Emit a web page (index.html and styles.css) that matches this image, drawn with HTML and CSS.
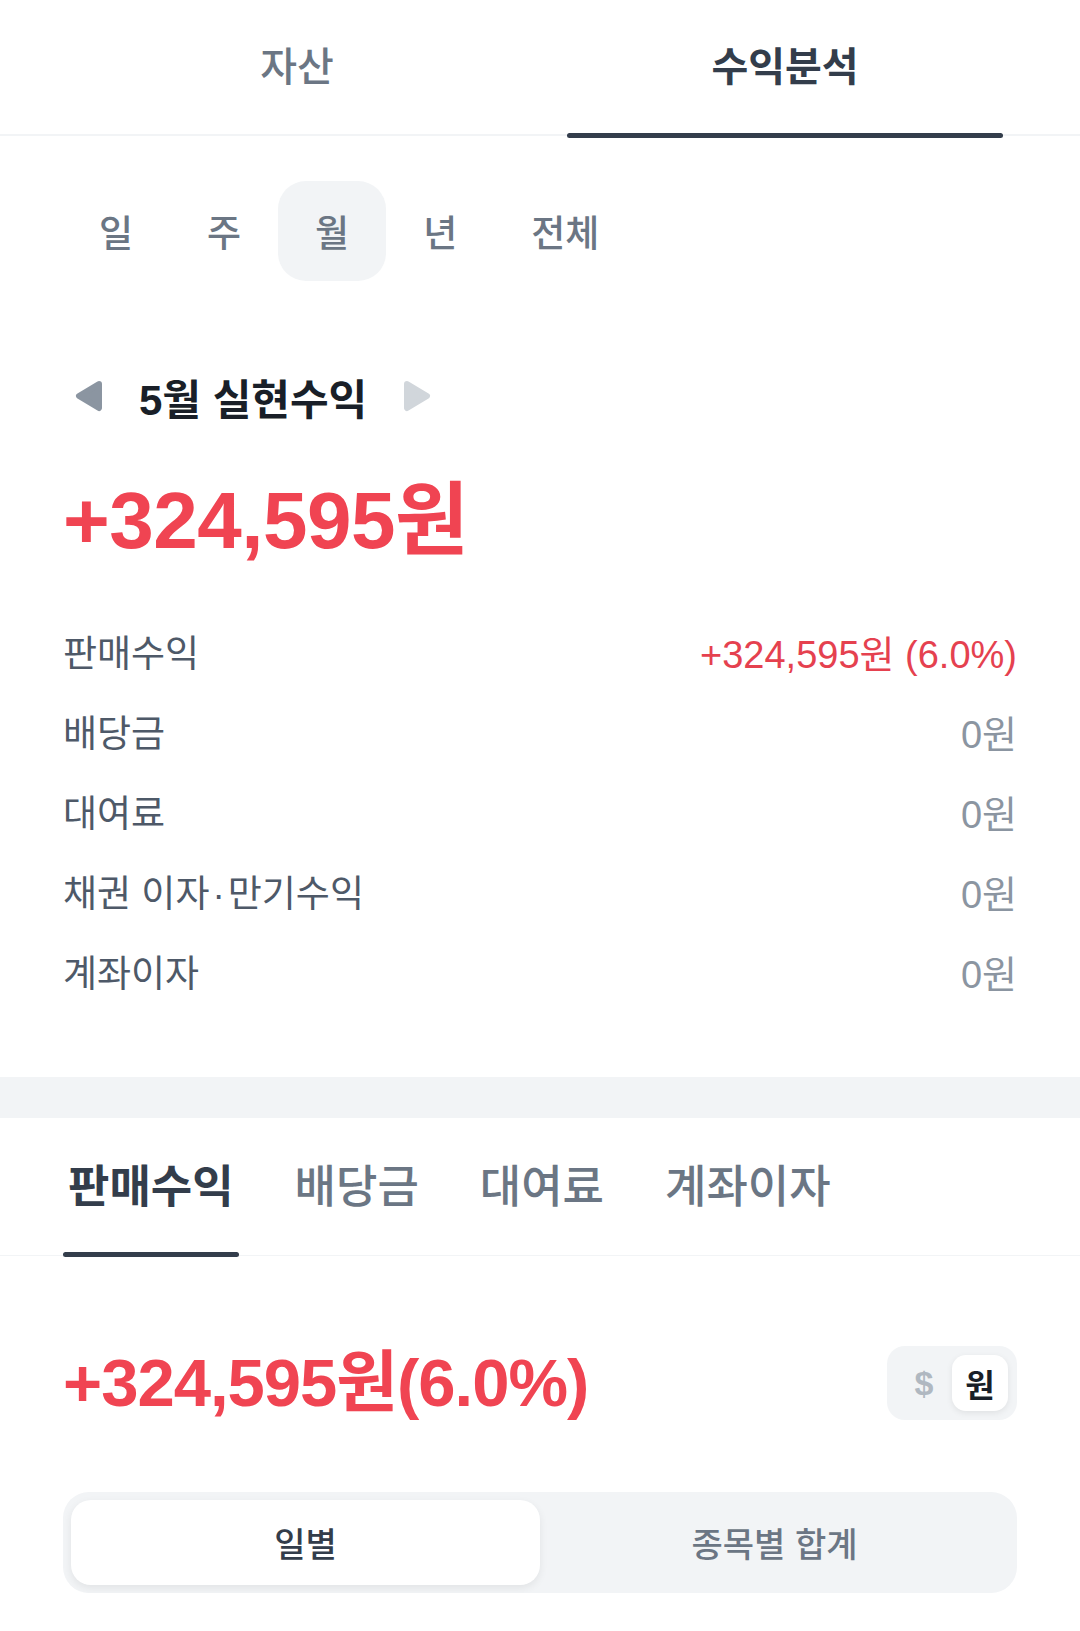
FILE: index.html
```html
<!DOCTYPE html>
<html lang="ko">
<head>
    <meta charset="UTF-8">
    <meta name="viewport" content="width=device-width, initial-scale=1.0">
    <title>수익분석</title>
    <link rel="stylesheet" href="styles.css">
</head>
<body>

    <!-- 상단 탭 -->
    <nav class="top-tabs">
        <div class="top-tab">자산</div>
        <div class="top-tab active">수익분석</div>
    </nav>

    <!-- 기간 선택 -->
    <div class="periods">
        <span class="chip">일</span>
        <span class="chip">주</span>
        <span class="chip selected">월</span>
        <span class="chip">년</span>
        <span class="chip">전체</span>
    </div>

    <!-- 실현수익 요약 -->
    <section class="summary">
        <div class="month-nav">
            <svg class="arrow" width="28" height="32" viewBox="0 0 28 32">
                <path d="M24 4 L4 16 L24 28 Z" fill="#8b95a1" stroke="#8b95a1" stroke-width="6" stroke-linejoin="round"/>
            </svg>
            <h2>5월 실현수익</h2>
            <svg class="arrow" width="28" height="32" viewBox="0 0 28 32">
                <path d="M4 4 L24 16 L4 28 Z" fill="#d1d6db" stroke="#d1d6db" stroke-width="6" stroke-linejoin="round"/>
            </svg>
        </div>

        <div class="total">+324,595원</div>

        <ul class="breakdown">
            <li><span>판매수익</span><span class="value plus">+324,595원 (6.0%)</span></li>
            <li><span>배당금</span><span class="value">0원</span></li>
            <li><span>대여료</span><span class="value">0원</span></li>
            <li><span>채권 이자<span class="dot">·</span>만기수익</span><span class="value">0원</span></li>
            <li><span>계좌이자</span><span class="value">0원</span></li>
        </ul>
    </section>

    <div class="band"></div>

    <!-- 항목 탭 -->
    <nav class="sub-tabs">
        <div class="sub-tab active">판매수익</div>
        <div class="sub-tab">배당금</div>
        <div class="sub-tab">대여료</div>
        <div class="sub-tab">계좌이자</div>
    </nav>

    <section class="detail">
        <div class="detail-head">
            <div class="detail-total">+324,595원(6.0%)</div>
            <div class="currency">
                <span class="cur">$</span>
                <span class="cur on">원</span>
            </div>
        </div>

        <div class="segment">
            <div class="seg on">일별</div>
            <div class="seg">종목별 합계</div>
        </div>
    </section>

</body>
</html>
```

FILE: styles.css
```css
/* 기본 */
body {
    margin: 0;
    padding: 0;
    background-color: #ffffff;
    font-family: "Liberation Sans", "Noto Sans CJK KR", sans-serif;
    color: #191f28;
}

/* 상단 탭 */
.top-tabs {
    display: flex;
    gap: 52px;
    padding: 0 77px 0 79px;
    height: 134px;
    border-bottom: 2px solid #f2f4f6;
}

.top-tab {
    position: relative;
    width: 436px;
    display: flex;
    align-items: center;
    justify-content: center;
    padding-bottom: 6px;
    font-family: "Noto Sans CJK KR", sans-serif;
    font-size: 40px;
    font-weight: 500;
    color: #6b7684;
}

.top-tab.active {
    font-weight: 700;
    color: #333d4b;
}

.top-tab.active::after {
    content: "";
    position: absolute;
    left: 0;
    right: 0;
    bottom: -4px;
    height: 5px;
    border-radius: 3px;
    background-color: #333d4b;
}

/* 기간 선택 */
.periods {
    display: flex;
    padding: 45px 63px 0 62px;
}

.chip {
    height: 100px;
    padding: 0 37px;
    display: flex;
    align-items: center;
    border-radius: 28px;
    font-family: "Noto Sans CJK KR", sans-serif;
    font-size: 37px;
    font-weight: 500;
    color: #6b7684;
}

.chip.selected {
    background-color: #f2f4f6;
}

/* 요약 */
.summary {
    padding: 90px 63px 0;
}

.month-nav {
    display: flex;
    align-items: center;
    gap: 36px;
    padding-left: 12px;
    height: 50px;
}

.month-nav h2 {
    margin: 0;
    font-size: 42px;
    font-weight: 700;
    color: #191f28;
}

.total {
    margin-top: 55px;
    height: 90px;
    line-height: 90px;
    font-size: 80px;
    font-weight: 700;
    color: #f04452;
    letter-spacing: -0.5px;
}

.breakdown {
    list-style: none;
    margin: 45px 0 0;
    padding: 0;
}

.breakdown li {
    display: flex;
    justify-content: space-between;
    align-items: center;
    height: 80px;
    font-size: 37px;
    color: #4e5968;
}

.breakdown .dot {
    margin: 0 3px;
}

.breakdown .value {
    font-size: 38px;
    color: #8b95a1;
}

.breakdown .value.plus {
    color: #e5414f;
}

.band {
    margin-top: 66px;
    height: 41px;
    background-color: #f2f4f6;
}

/* 항목 탭 */
.sub-tabs {
    display: flex;
    gap: 51px;
    padding: 0 63px;
    height: 137px;
    border-bottom: 1px solid #f2f4f6;
}

.sub-tab {
    position: relative;
    display: flex;
    align-items: center;
    padding: 0 5px 6px;
    font-family: "Noto Sans CJK KR", sans-serif;
    font-size: 45px;
    font-weight: 500;
    color: #6b7684;
}

.sub-tab.active {
    font-weight: 700;
    color: #333d4b;
}

.sub-tab.active::after {
    content: "";
    position: absolute;
    left: 0;
    right: 0;
    bottom: -2px;
    height: 5px;
    border-radius: 3px;
    background-color: #333d4b;
}

/* 상세 */
.detail {
    padding: 90px 63px 0;
}

.detail-head {
    display: flex;
    justify-content: space-between;
    align-items: center;
}

.detail-total {
    line-height: 74px;
    font-size: 67px;
    font-weight: 700;
    color: #f04452;
    letter-spacing: -1px;
}

.currency {
    display: flex;
    padding: 9px;
    border-radius: 18px;
    background-color: #f2f4f6;
}

.cur {
    width: 56px;
    height: 56px;
    display: flex;
    align-items: center;
    justify-content: center;
    border-radius: 14px;
    font-size: 34px;
    font-weight: 700;
    color: #b0b8c1;
}

.cur.on {
    background-color: #ffffff;
    color: #191f28;
    font-size: 32px;
    box-shadow: 0 2px 6px rgba(0, 0, 0, 0.08);
}

.segment {
    display: flex;
    margin-top: 72px;
    padding: 8px;
    border-radius: 26px;
    background-color: #f2f4f6;
}

.seg {
    flex: 1;
    height: 85px;
    display: flex;
    align-items: center;
    justify-content: center;
    border-radius: 20px;
    font-family: "Noto Sans CJK KR", sans-serif;
    font-size: 34px;
    font-weight: 500;
    color: #6b7684;
}

.seg.on {
    background-color: #ffffff;
    color: #333d4b;
    box-shadow: 0 3px 8px rgba(0, 0, 0, 0.07);
}
```
